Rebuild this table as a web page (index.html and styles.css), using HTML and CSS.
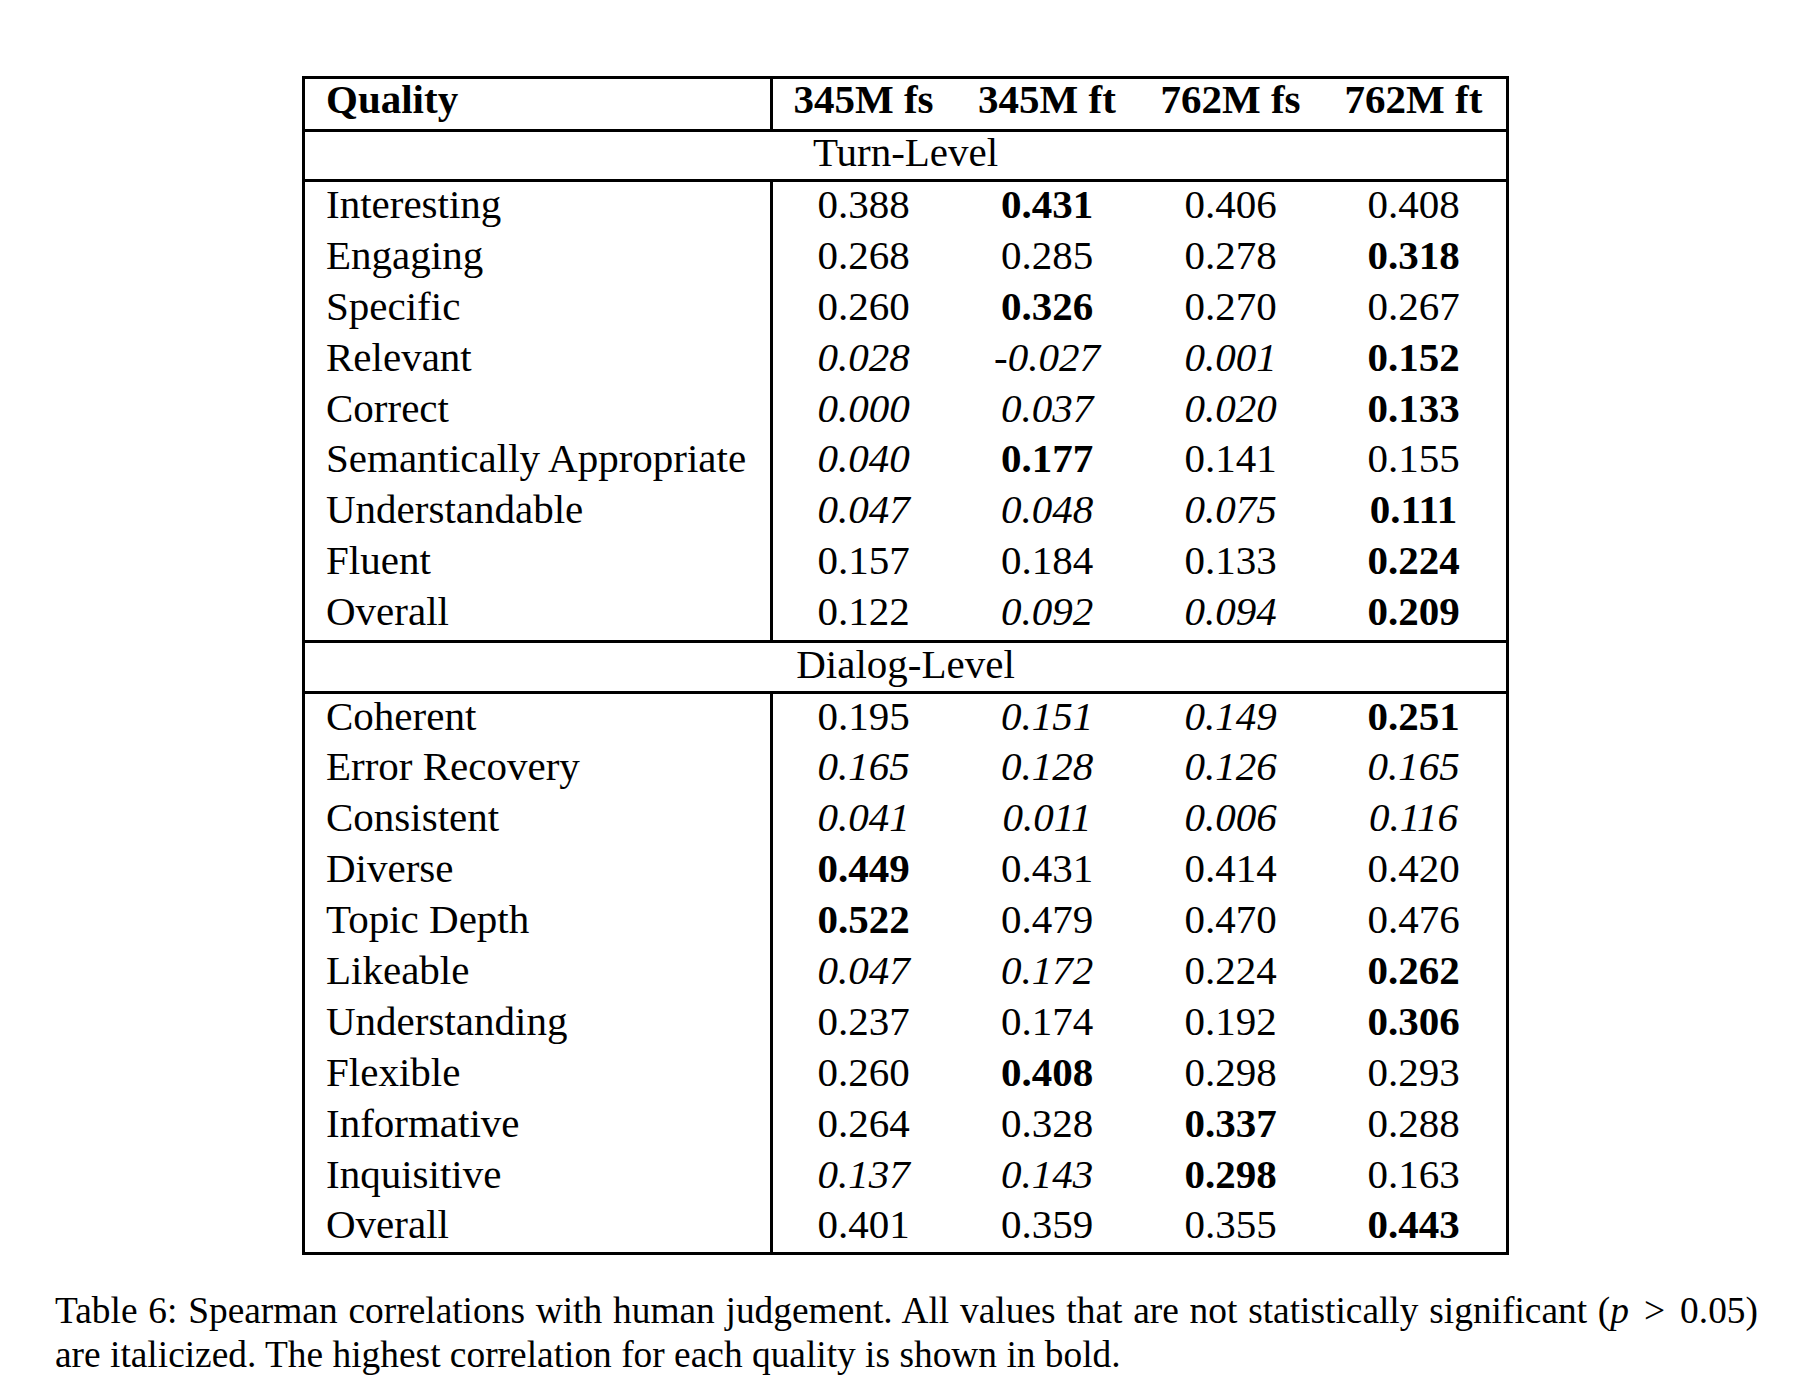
FILE: index.html
```html
<!DOCTYPE html>
<html lang="en">
<head>
<meta charset="utf-8">
<title>Table 6: Spearman correlations</title>
<link rel="stylesheet" href="styles.css">
</head>
<body>
<main class="page">
  <table class="results">
    <colgroup>
      <col class="c-label">
      <col class="c-a">
      <col class="c-b">
      <col class="c-c">
      <col class="c-d">
    </colgroup>
    <thead>
      <tr class="head">
        <th class="label">Quality</th>
        <th>345M fs</th>
        <th>345M ft</th>
        <th>762M fs</th>
        <th>762M ft</th>
      </tr>
    </thead>
    <tbody>
      <tr class="section"><td colspan="5">Turn-Level</td></tr>
      <tr class="first"><td class="label">Interesting</td><td>0.388</td><td><b>0.431</b></td><td>0.406</td><td>0.408</td></tr>
      <tr><td class="label">Engaging</td><td>0.268</td><td>0.285</td><td>0.278</td><td><b>0.318</b></td></tr>
      <tr><td class="label">Specific</td><td>0.260</td><td><b>0.326</b></td><td>0.270</td><td>0.267</td></tr>
      <tr><td class="label">Relevant</td><td><i>0.028</i></td><td><i>-0.027</i></td><td><i>0.001</i></td><td><b>0.152</b></td></tr>
      <tr><td class="label">Correct</td><td><i>0.000</i></td><td><i>0.037</i></td><td><i>0.020</i></td><td><b>0.133</b></td></tr>
      <tr><td class="label">Semantically Appropriate</td><td><i>0.040</i></td><td><b>0.177</b></td><td>0.141</td><td>0.155</td></tr>
      <tr><td class="label">Understandable</td><td><i>0.047</i></td><td><i>0.048</i></td><td><i>0.075</i></td><td><b>0.111</b></td></tr>
      <tr><td class="label">Fluent</td><td>0.157</td><td>0.184</td><td>0.133</td><td><b>0.224</b></td></tr>
      <tr><td class="label">Overall</td><td>0.122</td><td><i>0.092</i></td><td><i>0.094</i></td><td><b>0.209</b></td></tr>
      <tr class="section dialog"><td colspan="5">Dialog-Level</td></tr>
      <tr class="first"><td class="label">Coherent</td><td>0.195</td><td><i>0.151</i></td><td><i>0.149</i></td><td><b>0.251</b></td></tr>
      <tr><td class="label">Error Recovery</td><td><i>0.165</i></td><td><i>0.128</i></td><td><i>0.126</i></td><td><i>0.165</i></td></tr>
      <tr><td class="label">Consistent</td><td><i>0.041</i></td><td><i>0.011</i></td><td><i>0.006</i></td><td><i>0.116</i></td></tr>
      <tr><td class="label">Diverse</td><td><b>0.449</b></td><td>0.431</td><td>0.414</td><td>0.420</td></tr>
      <tr><td class="label">Topic Depth</td><td><b>0.522</b></td><td>0.479</td><td>0.470</td><td>0.476</td></tr>
      <tr><td class="label">Likeable</td><td><i>0.047</i></td><td><i>0.172</i></td><td>0.224</td><td><b>0.262</b></td></tr>
      <tr><td class="label">Understanding</td><td>0.237</td><td>0.174</td><td>0.192</td><td><b>0.306</b></td></tr>
      <tr><td class="label">Flexible</td><td>0.260</td><td><b>0.408</b></td><td>0.298</td><td>0.293</td></tr>
      <tr><td class="label">Informative</td><td>0.264</td><td>0.328</td><td><b>0.337</b></td><td>0.288</td></tr>
      <tr><td class="label">Inquisitive</td><td><i>0.137</i></td><td><i>0.143</i></td><td><b>0.298</b></td><td>0.163</td></tr>
      <tr class="last"><td class="label">Overall</td><td>0.401</td><td>0.359</td><td>0.355</td><td><b>0.443</b></td></tr>
    </tbody>
  </table>
  <p class="caption">
    <span class="cap-line justified">Table 6: Spearman correlations with human judgement. All values that are not statistically significant (<i class="math">p</i><span class="rel">&gt;</span>0.05)</span>
    <span class="cap-line">are italicized. The highest correlation for each quality is shown in bold.</span>
  </p>
</main>
</body>
</html>
```

FILE: styles.css
```css
html, body {
  margin: 0;
  padding: 0;
  background: #ffffff;
}

body {
  font-family: "Liberation Serif", "Times New Roman", serif;
  color: #000000;
}

.page {
  padding-top: 76px;
}

.results {
  margin-left: 302px;
  width: 1207px;
  table-layout: fixed;
  border-collapse: separate;
  border-spacing: 0;
  border: 3px solid #000;
  font-size: 41px;
}

.c-label { width: 468px; }
.c-a { width: 181px; }
.c-b { width: 186px; }
.c-c { width: 181px; }
.c-d { width: 185px; }

.results th,
.results td {
  padding: 0;
  text-align: center;
  white-space: nowrap;
  vertical-align: top;
}

.results .label {
  text-align: left;
  padding-left: 21px;
  border-right: 3px solid #000;
}

.results th {
  font-weight: bold;
  line-height: 41px;
  padding-bottom: 9px;
}

.results td {
  line-height: 45px;
  padding-bottom: 5.9px;
  font-weight: normal;
}

.results .last td {
  padding-bottom: 4.5px;
}

.results .section td {
  border-top: 3px solid #000;
  line-height: 41px;
  padding-bottom: 6px;
  text-align: center;
}

.results .section.dialog td {
  padding-top: 0.5px;
  padding-bottom: 6px;
}

.results .first td {
  border-top: 3px solid #000;
}

.results b {
  font-weight: bold;
}

.results i {
  font-style: italic;
}

.caption {
  margin: 34px 0 0 55px;
  width: 1703px;
  font-size: 37.4px;
  line-height: 44px;
}

.cap-line {
  display: block;
}

.cap-line.justified {
  text-align: justify;
  text-align-last: justify;
}

.math {
  font-style: italic;
}

.rel {
  margin: 0 15px;
}
```
